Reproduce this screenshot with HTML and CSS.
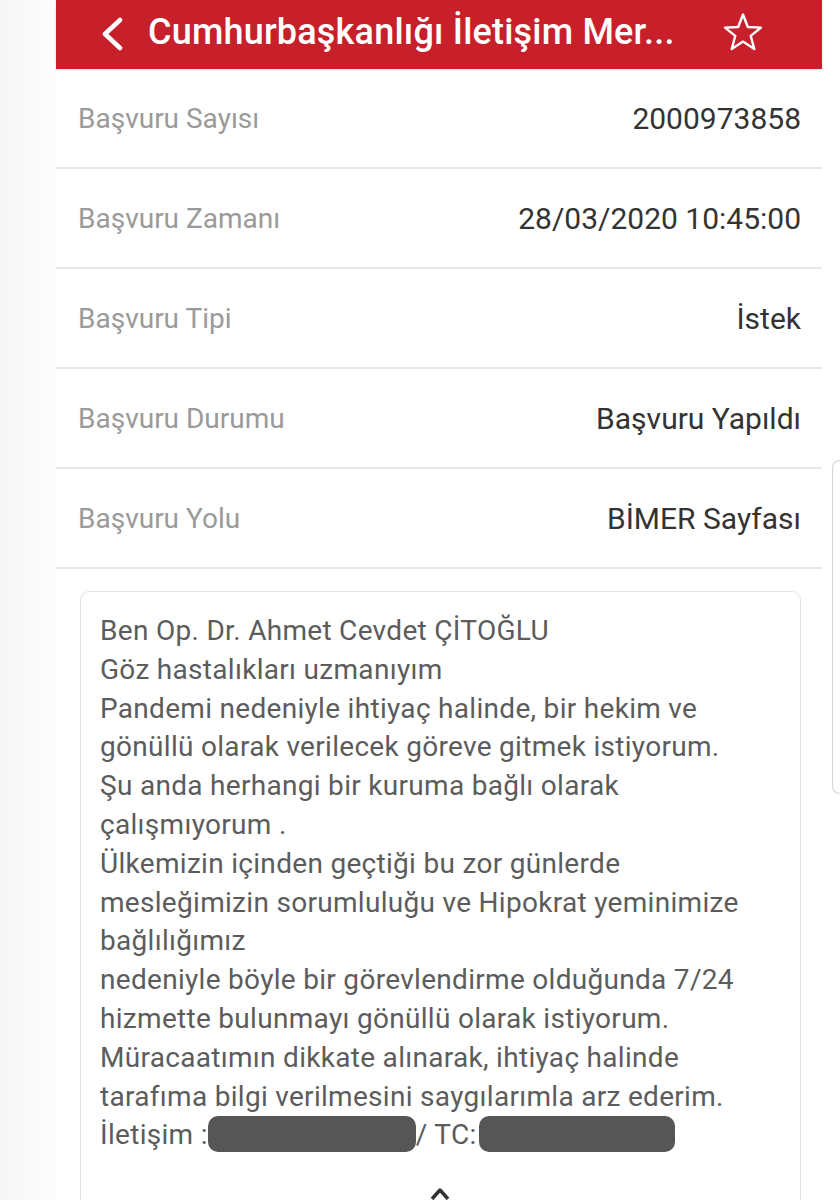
FILE: index.html
```html
<!DOCTYPE html>
<html lang="tr">
<head>
  <meta charset="UTF-8" />
  <meta name="viewport" content="width=device-width, initial-scale=1.0"/>
  <title>Başvuru Detayı</title>
  <link rel="stylesheet" href="styles.css">
</head>
<body>

  <div class="screen">
    <div class="phone">
      <div class="topbar">
        <svg class="back" width="24" height="34" viewBox="0 0 24 34">
          <polyline points="20,3 5,17 20,31" fill="none" stroke="#fff" stroke-width="4.5" stroke-linecap="round" stroke-linejoin="round"/>
        </svg>
        <span class="title">Cumhurbaşkanlığı İletişim Mer...</span>
        <svg class="star" width="42" height="40" viewBox="0 0 42 40">
          <polygon points="21,2.5 25.8,15 39,15.6 28.7,23.9 32.3,37 21,29.6 9.7,37 13.3,23.9 3,15.6 16.2,15" fill="none" stroke="#fff" stroke-width="2.4" stroke-linejoin="round"/>
        </svg>
      </div>

      <div class="row">
        <span class="label">Başvuru Sayısı</span>
        <span class="value">2000973858</span>
      </div>
      <div class="row">
        <span class="label">Başvuru Zamanı</span>
        <span class="value">28/03/2020 10:45:00</span>
      </div>
      <div class="row">
        <span class="label">Başvuru Tipi</span>
        <span class="value">İstek</span>
      </div>
      <div class="row">
        <span class="label">Başvuru Durumu</span>
        <span class="value">Başvuru Yapıldı</span>
      </div>
      <div class="row">
        <span class="label">Başvuru Yolu</span>
        <span class="value">BİMER Sayfası</span>
      </div>

      <div class="message">
        <p>Ben Op. Dr. Ahmet Cevdet ÇİTOĞLU<br>
        Göz hastalıkları uzmanıyım<br>
        Pandemi nedeniyle ihtiyaç halinde, bir hekim ve<br>
        gönüllü olarak verilecek göreve gitmek istiyorum.<br>
        Şu anda herhangi bir kuruma bağlı olarak<br>
        çalışmıyorum .<br>
        Ülkemizin içinden geçtiği bu zor günlerde<br>
        mesleğimizin sorumluluğu ve Hipokrat yeminimize<br>
        bağlılığımız<br>
        nedeniyle böyle bir görevlendirme olduğunda 7/24<br>
        hizmette bulunmayı gönüllü olarak istiyorum.<br>
        Müracaatımın dikkate alınarak, ihtiyaç halinde<br>
        tarafıma bilgi verilmesini saygılarımla arz ederim.<br>
        İletişim :<span class="redact redact-phone"></span>/ TC:<span class="redact redact-tc"></span></p>
        <div class="more">
          <svg width="24" height="14" viewBox="0 0 24 14">
            <polyline points="4,13 12,4 20,13" fill="none" stroke="#333" stroke-width="3.5" stroke-linejoin="round"/>
          </svg>
        </div>
      </div>
    </div>

    <div class="side-card"></div>
  </div>

</body>
</html>
```

FILE: styles.css
```css
body {
  margin: 0;
  font-family: Roboto, 'Liberation Sans', sans-serif;
  background: #fff;
  overflow: hidden;
}
.screen {
  display: flex;
  align-items: flex-start;
  padding-left: 56px;
  height: 1200px;
  background: linear-gradient(to right, #f6f6f6, #fdfdfd 56px, #fff 56px);
}
.phone {
  width: 766px;
  flex-shrink: 0;
  background: #fff;
}
.topbar {
  height: 69px;
  background: #c8202a;
  display: flex;
  align-items: center;
  padding: 0 58px 0 44px;
  box-shadow: 0 1px 2px rgba(0,0,0,0.15);
}
.back { margin-top: -2px; }
.title {
  color: #fff;
  font-size: 36px;
  font-weight: 500;
  letter-spacing: 0.2px;
  margin-left: 24px;
  margin-top: -6px;
}
.star {
  margin-left: auto;
  margin-top: -6px;
}
.row {
  height: 98px;
  border-bottom: 2px solid #e8e8e8;
  display: flex;
  justify-content: space-between;
  align-items: center;
  padding: 0 21px 0 22px;
}
.label {
  color: #9a9a9a;
  font-size: 28px;
}
.value {
  color: #333;
  font-size: 30px;
}
.message {
  margin: 22px 21px 0 24px;
  border: 1.5px solid #e2e2e2;
  border-bottom: none;
  border-radius: 9px 9px 0 0;
  padding: 20px 20px 0 19px;
  height: 620px;
}
.message p {
  margin: 0;
  color: #5c5c5c;
  font-size: 28px;
  line-height: 38.8px;
  letter-spacing: 0.3px;
}
.redact {
  display: inline-block;
  height: 36px;
  vertical-align: middle;
  background: #565656;
  border-radius: 10px;
  margin-top: -6px;
}
.redact-phone { width: 208px; }
.redact-tc { width: 196px; margin-left: 2px; }
.more {
  padding-left: 328px;
  margin-top: 30px;
}
.side-card {
  margin-top: 460px;
  margin-left: 10px;
  width: 20px;
  height: 332px;
  border: 1.5px solid #d4d4d4;
  border-right: none;
  border-radius: 10px 0 0 10px;
}
```
